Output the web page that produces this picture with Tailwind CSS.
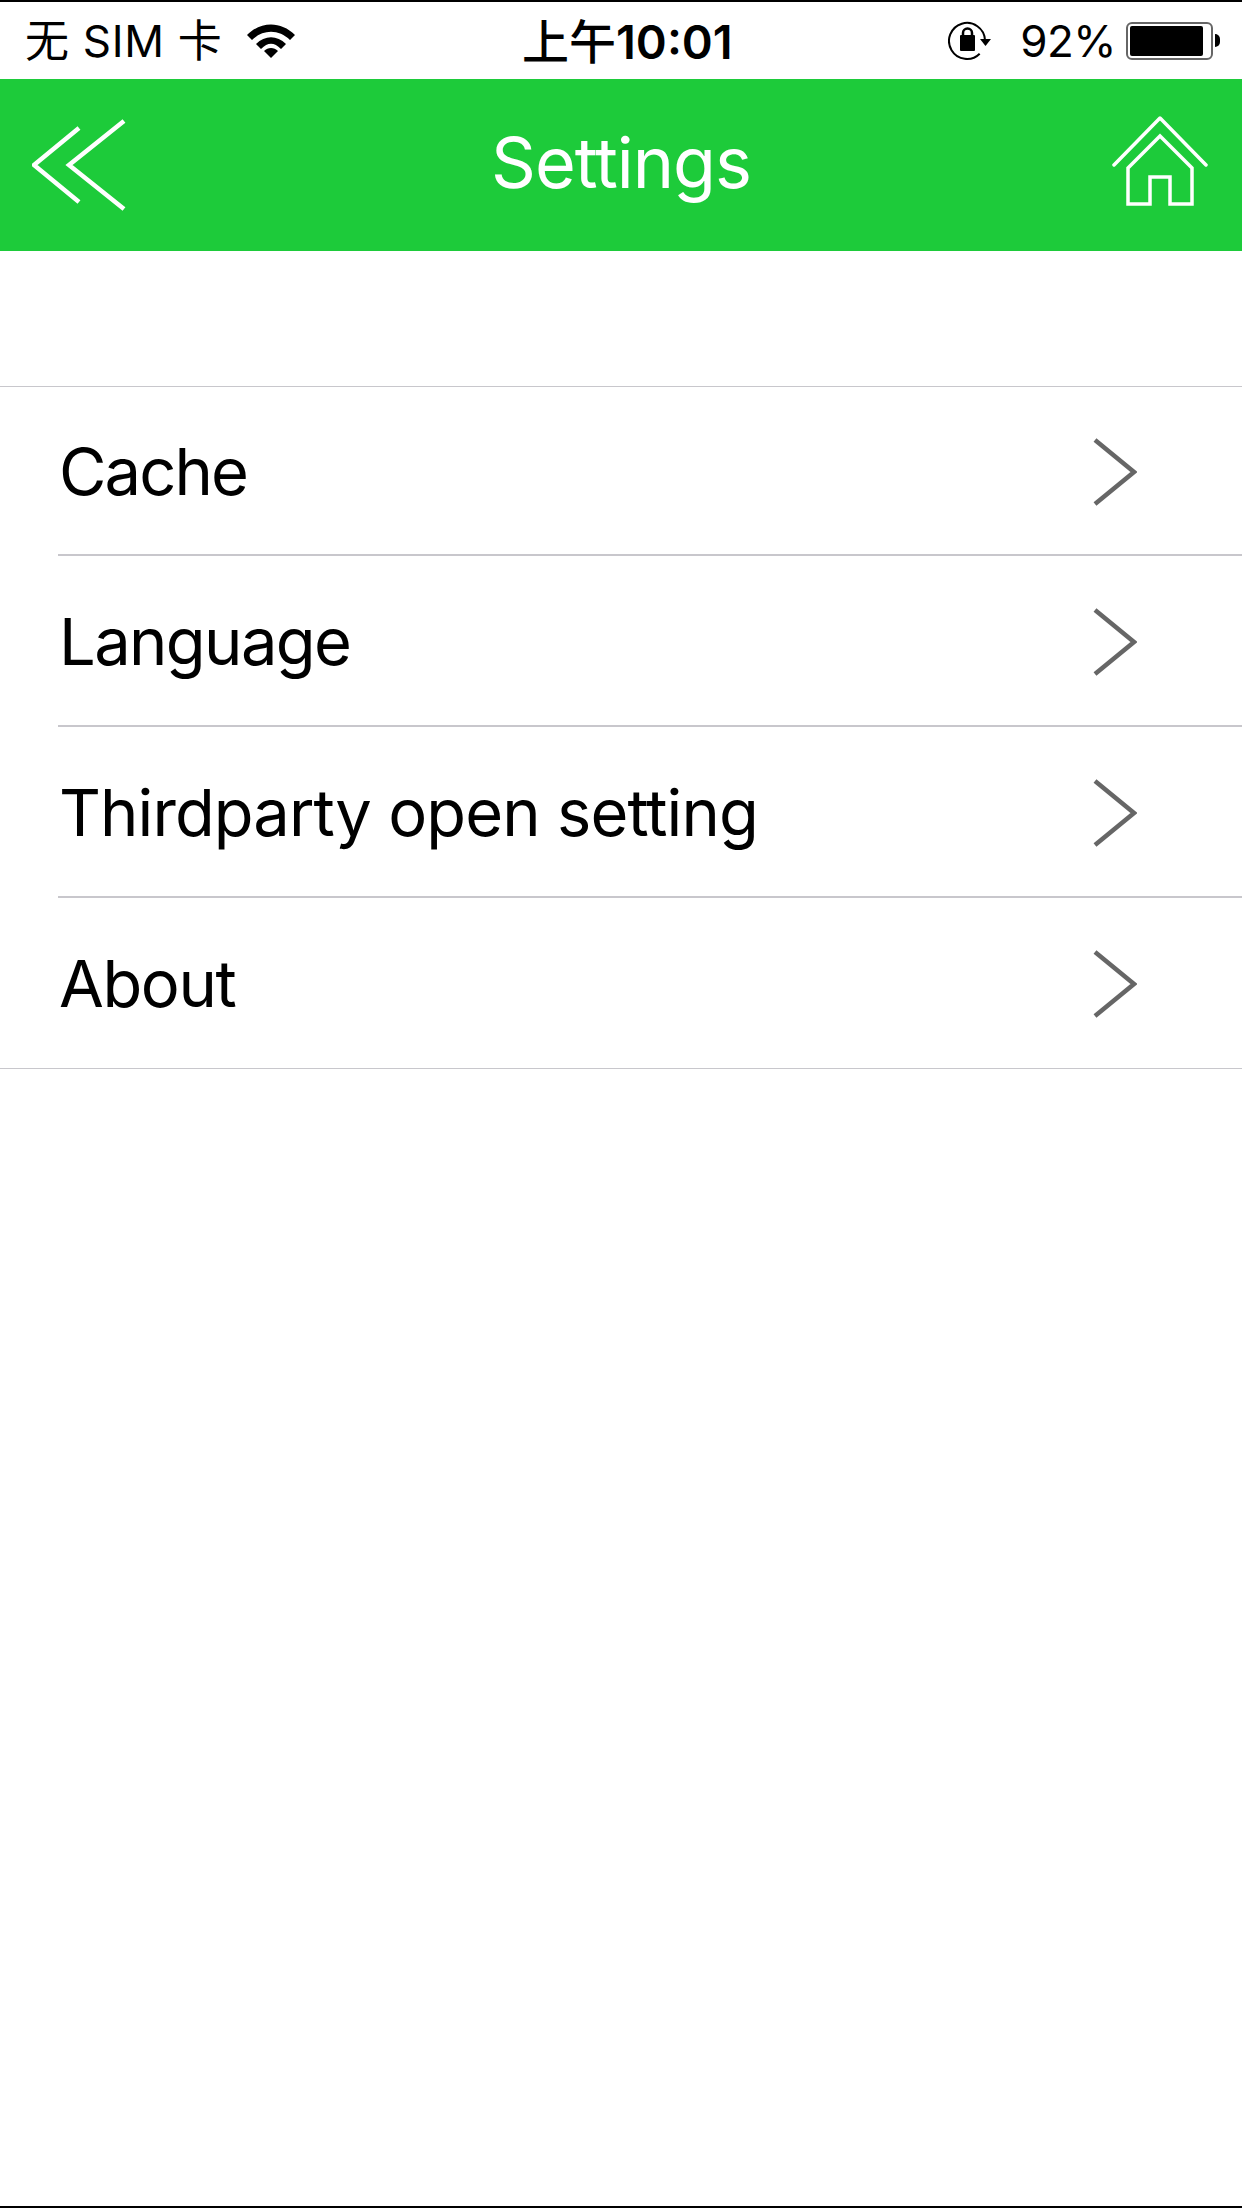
<!DOCTYPE html>
<html lang="en">
<head>
  <meta charset="UTF-8" />
  <title>Settings</title>
  <script src="https://cdn.jsdelivr.net/npm/@tailwindcss/browser@4"></script>
</head>
<body class="bg-white w-[1242px] h-[2208px] flex flex-col overflow-hidden font-['Inter','Noto_Sans_CJK_SC',sans-serif] text-black">
  <!-- status bar -->
  <div class="h-[79px] border-t-2 border-black flex items-center justify-between relative pl-[25px] pr-[22px] text-[44px]">
    <div class="flex items-center">
      <span class="tracking-[0.7px]">无 SIM 卡</span>
      <svg class="ml-[25px]" width="48" height="36" viewBox="0 0 48 36">
        <path d="M0 12 C14 -2 34 -2 48 12 L43 17 C32 6 16 6 5 17 Z" fill="#000"/>
        <path d="M9 21 C18 12 30 12 39 21 L34 26 C27 19 21 19 14 26 Z" fill="#000"/>
        <path d="M17 28 C21 24 27 24 31 28 L24 35 Z" fill="#000"/>
      </svg>
    </div>
    <div class="absolute left-[522px] top-[15px] leading-[50px] text-[47px]"><span class="font-medium">上午</span><span class="font-semibold">10:01</span></div>
    <div class="flex items-center">
      <svg width="44" height="42" viewBox="0 0 44 42" fill="none">
        <path d="M31.700 33.700 A18 18 0 1 1 37 20" stroke="#000" stroke-width="2"/>
        <path d="M32 19 H43 L37.500 26 Z" fill="#000"/>
        <rect x="12" y="15" width="15" height="16" rx="1" fill="#000"/>
        <path d="M15 16 V13 A4.500 4.500 0 0 1 24 13 V16" stroke="#000" stroke-width="2.500"/>
      </svg>
      <span class="ml-[28px] tracking-[-0.5px]">92%</span>
      <div class="ml-[10px] w-[87px] h-[38px] border-2 border-[#666] rounded-[6px] p-[2px] pr-[8px]">
        <div class="w-full h-full bg-black rounded-[2px]"></div>
      </div>
      <div class="ml-[2px] w-[5px] h-[13px] bg-black rounded-r-full"></div>
    </div>
  </div>

  <!-- nav bar -->
  <header class="h-[172px] bg-[#1dcb3a] flex items-center justify-between relative">
    <svg class="ml-[32px]" width="94" height="94" viewBox="0 0 94 94" fill="none" stroke="#fff" stroke-width="4.500">
      <path d="M47 10 L2 47 L47 84"/>
      <path d="M92 3 L37 47 L92 91"/>
    </svg>
    <h1 class="absolute inset-x-0 text-center text-[70px] tracking-[-1px] text-white leading-none pb-[4px]">Settings</h1>
    <svg class="mr-[34px] mb-[6px]" width="96" height="92" viewBox="0 0 96 92" fill="none" stroke="#fff" stroke-width="3.500">
      <path d="M2 49 L48 2 L94 49" stroke-linecap="round" stroke-linejoin="round"/>
      <path d="M16 88 V52 L48 20 L80 52 V88 H58 V61 H38 V88 Z"/>
    </svg>
  </header>

  <!-- settings list -->
  <main class="mt-[135px] border-t-[1.500px] border-b-[1.500px] border-[#c8c7cc]">
    <a class="h-[169px] ml-[58px] border-b-2 border-[#c8c7cc] flex items-center justify-between pr-[105px] pt-[2px] text-[65px] pl-[1px]">
      <span class="tracking-[-1.900px]">Cache</span>
      <svg width="44" height="68" viewBox="0 0 44 68" fill="none" stroke="#666" stroke-width="4.500"><path d="M2 2 L41 34 L2 66"/></svg>
    </a>
    <a class="h-[171px] ml-[58px] border-b-2 border-[#c8c7cc] flex items-center justify-between pr-[105px] pt-[2px] text-[65px] pl-[1px]">
      <span class="tracking-[-1.600px]">Language</span>
      <svg width="44" height="68" viewBox="0 0 44 68" fill="none" stroke="#666" stroke-width="4.500"><path d="M2 2 L41 34 L2 66"/></svg>
    </a>
    <a class="h-[171px] ml-[58px] border-b-2 border-[#c8c7cc] flex items-center justify-between pr-[105px] pt-[2px] text-[65px] pl-[1px]">
      <span class="tracking-[-0.900px]">Thirdparty open setting</span>
      <svg width="44" height="68" viewBox="0 0 44 68" fill="none" stroke="#666" stroke-width="4.500"><path d="M2 2 L41 34 L2 66"/></svg>
    </a>
    <a class="h-[170px] ml-[58px] flex items-center justify-between pr-[105px] pt-[2px] text-[65px] pl-[1px]">
      <span class="tracking-[-1.400px]">About</span>
      <svg width="44" height="68" viewBox="0 0 44 68" fill="none" stroke="#666" stroke-width="4.500"><path d="M2 2 L41 34 L2 66"/></svg>
    </a>
  </main>

  <div class="mt-auto h-[2px] bg-black"></div>
</body>
</html>
